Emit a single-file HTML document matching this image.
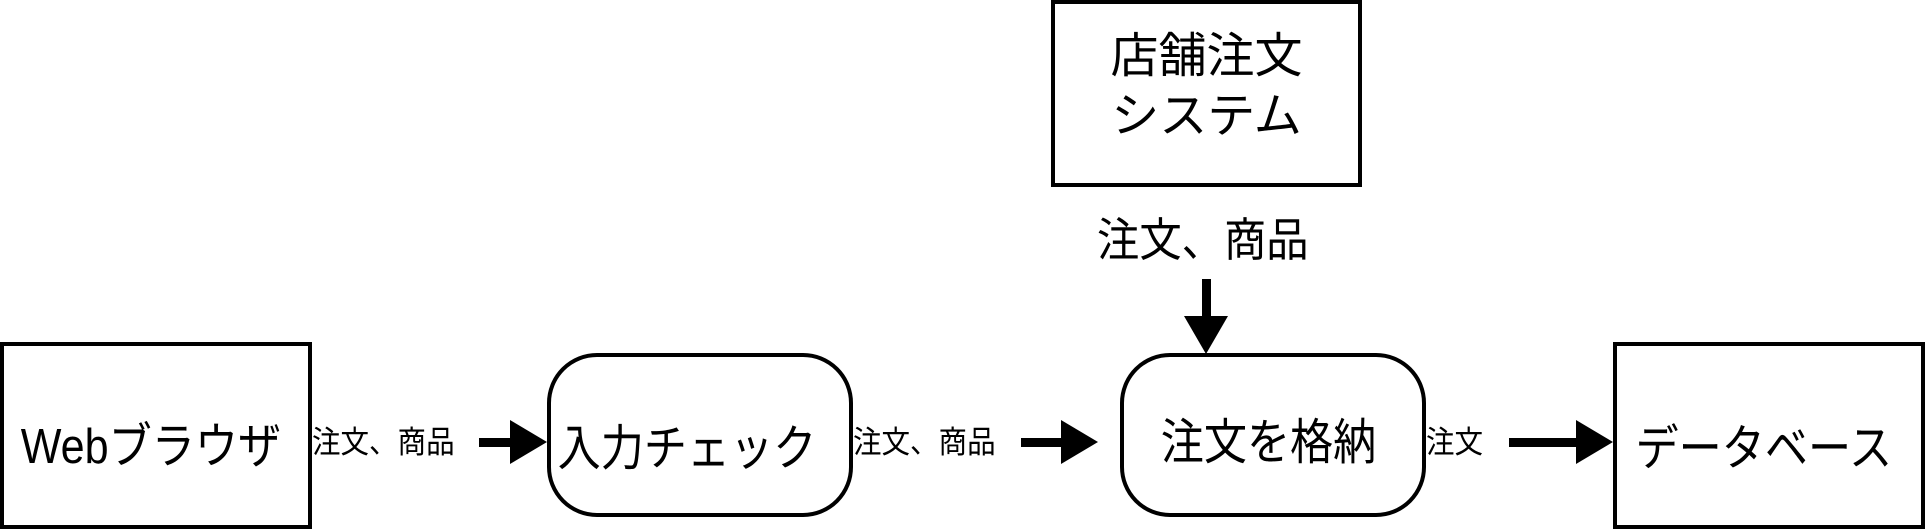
<!DOCTYPE html>
<html><head><meta charset="utf-8"><style>
body{margin:0;width:1925px;height:529px;background:#fff;position:relative;overflow:hidden;font-family:"Liberation Sans","Noto Sans CJK JP",sans-serif;color:#000}
.b{position:absolute;border:4px solid #000;box-sizing:border-box;display:flex;align-items:center;justify-content:center;text-align:center;font-size:49px;line-height:60px}
.b span{display:inline-block;transform:scaleX(.88);white-space:nowrap;flex-shrink:0}
.t{position:absolute;white-space:nowrap;font-size:31px;line-height:30px;transform-origin:left center;transform:scaleX(.92)}
</style></head><body>
<div class="b" style="left:0;top:342px;width:312px;height:187px;padding-top:22px;padding-right:10px"><span>Webブラウザ</span></div>
<div class="b" style="left:547px;top:353px;width:306px;height:164px;border-radius:50px;padding-top:28px;padding-right:26px"><span>入力チェック</span></div>
<div class="b" style="left:1120px;top:353px;width:306px;height:164px;border-radius:50px;padding-top:16px;padding-right:8px"><span>注文を格納</span></div>
<div class="b" style="left:1613px;top:342px;width:312px;height:187px;padding-top:26px;padding-right:10px"><span>データベース</span></div>
<div class="b" style="left:1051px;top:0;width:311px;height:187px;padding-bottom:14px"><span style="transform:none;font-size:48px">店舗注文<br>システム</span></div>
<div class="t" style="left:312px;top:428px">注文、商品</div>
<div class="t" style="left:853px;top:428px">注文、商品</div>
<div class="t" style="left:1426px;top:428px">注文</div>
<div class="t" style="left:1097px;top:218px;font-size:46px;line-height:44px">注文、商品</div>
<svg width="1925" height="529" style="position:absolute;left:0;top:0">
<g fill="#000">
<rect x="479" y="438" width="33" height="9"/><polygon points="510,420 547,442 510,464"/>
<rect x="1021" y="438" width="42" height="9"/><polygon points="1061,420 1098,442 1061,464"/>
<rect x="1509" y="438" width="69" height="9"/><polygon points="1576,420 1613,442 1576,464"/>
<rect x="1202" y="279" width="9" height="39"/><polygon points="1184,316 1228,316 1206,354"/>
</g></svg>
</body></html>
